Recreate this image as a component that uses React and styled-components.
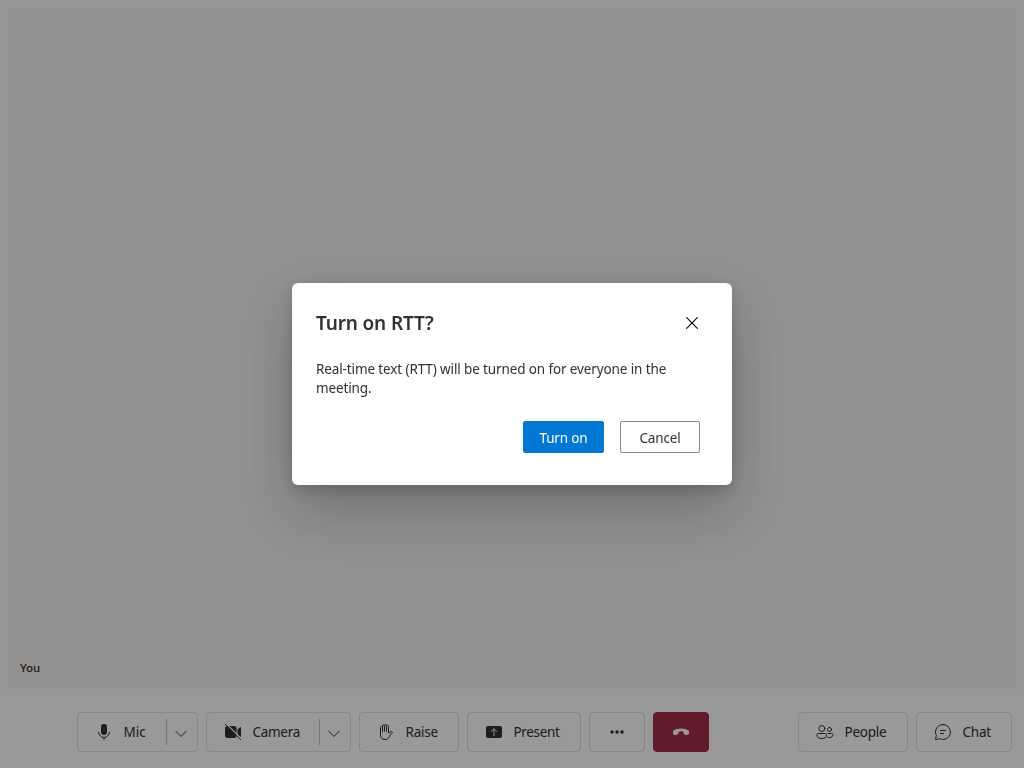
import React from "react";
import styled, { createGlobalStyle } from "styled-components";

const GlobalStyle = createGlobalStyle`
  * { box-sizing: border-box; }
  body {
    margin: 0;
    overflow: hidden;
    color: #323130;
    font-family: "Segoe UI", "Noto Sans", sans-serif;
  }
  button { font: inherit; color: inherit; margin: 0; padding: 0; border: 0; background: none; }
`;

const Page = styled.div`
  width: 100vw;
  height: 100vh;
  display: flex;
  flex-direction: column;
  background: #fff;
`;

const Gallery = styled.main`
  flex: 1;
  padding: 8px;
  background: #faf9f8;
  display: flex;
`;

const Tile = styled.section`
  flex: 1;
  display: flex;
  align-items: flex-end;
  padding: 0 12px 12px;
  border-radius: 4px;
  background: #f3f2f1;
`;

const ParticipantName = styled.span`
  font-size: 11.5px;
  font-weight: 500;
  line-height: 16px;
  letter-spacing: -0.1px;
`;

const ControlBar = styled.footer`
  height: 72px;
  display: flex;
  align-items: center;
  gap: 12px;
  padding-right: 12px;
`;

const ControlGroup = styled.div`
  display: flex;
  gap: 8px;
  justify-content: center;
  flex: ${(p) => (p.$grow ? 1 : "none")};
`;

const ControlButton = styled.button`
  width: ${(p) => p.$width}px;
  height: 40px;
  display: flex;
  align-items: center;
  justify-content: ${(p) => (p.$iconOnly ? "center" : "flex-start")};
  padding-left: ${(p) => (p.$iconOnly ? 0 : 16)}px;
  border: 1px solid ${(p) => (p.$danger ? "#a42e43" : "#e1dfdd")};
  border-radius: 4px;
  background: ${(p) => (p.$danger ? "#a42e43" : "#fff")};
  color: ${(p) => (p.$danger ? "#fff" : "#323130")};
`;

const ControlLabel = styled.span`
  margin-left: 9.5px;
  font-size: 13.5px;
  line-height: 20px;
  white-space: nowrap;
  letter-spacing: ${(p) => p.$track || 0}px;
`;

const SplitMenu = styled.span`
  margin-left: auto;
  width: 31px;
  height: 26px;
  display: flex;
  align-items: center;
  padding: 3px 0 0 8px;
  border-left: 1px solid #c8c6c4;
`;

const Icon = styled.svg`
  display: block;
  flex: none;
  width: ${(p) => p.$size || 20}px;
  height: ${(p) => p.$size || 20}px;
`;

const Overlay = styled.div`
  position: fixed;
  inset: 0;
  display: flex;
  align-items: center;
  justify-content: center;
  background: rgba(0, 0, 0, 0.4);
`;

const Dialog = styled.div`
  width: 440px;
  height: 202px;
  padding: 24px 32px 32px 24px;
  display: flex;
  flex-direction: column;
  border-radius: 6px;
  background: #fff;
  box-shadow: 0 25.6px 57.6px rgba(0, 0, 0, 0.22), 0 4.8px 14.4px rgba(0, 0, 0, 0.18);
`;

const DialogHeader = styled.header`
  height: 32px;
  display: flex;
  align-items: center;
  justify-content: space-between;
`;

const Title = styled.h1`
  margin: 0;
  font-size: 19px;
  font-weight: 600;
  line-height: 28px;
  letter-spacing: -0.15px;
`;

const CloseButton = styled.button`
  padding-right: 2px;
`;

const Message = styled.p`
  margin: 21px 0 0;
  font-size: 13.5px;
  line-height: 19px;
  letter-spacing: -0.12px;
`;

const Actions = styled.div`
  margin-top: auto;
  display: flex;
  justify-content: flex-end;
  gap: 16px;
`;

const ActionButton = styled.button`
  width: ${(p) => (p.$primary ? 81 : 80)}px;
  height: 32px;
  padding-top: 1px;
  border: 1px solid ${(p) => (p.$primary ? "#0078d4" : "#8a8886")};
  border-radius: 2px;
  background: ${(p) => (p.$primary ? "#0078d4" : "#fff")};
  color: ${(p) => (p.$primary ? "#fff" : "#323130")};
  font-size: 13.5px;
  letter-spacing: -0.15px;
`;

const stroke = { fill: "none", stroke: "currentColor", strokeLinecap: "round", strokeLinejoin: "round" };

const MicIcon = () => (
  <Icon viewBox="0 0 20 20">
    <rect x="7" y="2" width="6" height="11" rx="3" fill="currentColor" />
    <path d="M4.5 10a5.5 5.5 0 0 0 11 0M10 15.5V17.5" {...stroke} />
  </Icon>
);

const CameraOffIcon = () => (
  <Icon viewBox="0 0 20 20">
    <path d="M4.5 4h6.5a2.5 2.5 0 0 1 2.5 2.5v7A2.5 2.5 0 0 1 11 16H4.5A2.5 2.5 0 0 1 2 13.5v-7A2.5 2.5 0 0 1 4.5 4ZM14.5 7.3l2.7-2.1a.5.5 0 0 1 .8.4v8.8a.5.5 0 0 1-.8.4l-2.7-2.1Z" fill="currentColor" />
    <path d="M3.3 1.7 19 17.4" stroke="#fff" strokeWidth="1.2" />
    <path d="M2.4 2.4 17.7 17.7" {...stroke} />
  </Icon>
);

const HandIcon = () => (
  <Icon viewBox="0 0 20 20">
    <path d="M6.500 9.500V5.500a1 1 0 0 0-2 0V13c0 2.800 1.400 4.500 4.500 4.500 2 0 3.300-.7 4.200-2.500.8-1.700 1.800-3 3.100-4.100.3-.4.3-.9-.3-1.100-1.300-.3-2.500.3-3.500 1.200V4.500a1 1 0 0 0-2 0V9M6.500 9V4a1 1 0 0 1 2 0V9M8.500 9V3.500a1 1 0 0 1 2 0V9" {...stroke} />
  </Icon>
);

const PresentIcon = () => (
  <Icon viewBox="0 0 20 20">
    <rect x="2" y="4" width="16" height="12" rx="2" fill="currentColor" />
    <path d="M10 13.5V7M7.3 9.5 10 6.8l2.7 2.7" {...stroke} stroke="#fff" />
  </Icon>
);

const MoreIcon = () => (
  <Icon viewBox="0 0 20 20" fill="currentColor">
    <circle cx="5" cy="10" r="1.75" />
    <circle cx="10" cy="10" r="1.75" />
    <circle cx="15" cy="10" r="1.75" />
  </Icon>
);

const EndCallIcon = () => (
  <Icon viewBox="0 0 20 20">
    <path d="M18 10.7 17.8 11.8c-.2.9-1 1.4-1.9 1.2l-1.8-.3c-.8-.1-1.3-.7-1.5-1.4l-.4-1.600c-1.400-.5-3-.5-4.400 0l-.4 1.600c-.2.7-.7 1.300-1.500 1.400l-1.800.3c-.9.2-1.600-.3-1.900-1.200L2 10.700c-.2-.8 0-1.500.6-2.100C4.200 7.200 7 6.500 10 6.500s5.800.7 7.400 2.100c.6.6.8 1.300.6 2.100Z" fill="currentColor" />
  </Icon>
);

const PeopleIcon = () => (
  <Icon viewBox="0 0 20 20">
    <circle cx="6.8" cy="6.5" r="3" {...stroke} />
    <circle cx="14.5" cy="7.500" r="2" {...stroke} />
    <path d="M3.500 11.500h6.500c.9 0 1.500.7 1.500 1.500 0 2.400-2 3.500-4.700 3.500S2 15.400 2 13c0-.8.6-1.500 1.500-1.500ZM13 11.500h3.500c.9 0 1.500.6 1.500 1.400 0 1.600-1.300 2.600-3.500 2.600-.7 0-1.300-.1-1.800-.3" {...stroke} />
  </Icon>
);

const ChatIcon = () => (
  <Icon viewBox="0 0 20 20">
    <path d="M10 2.500a7.500 7.500 0 1 1-3.600 14.100l-3.500.9a.3.300 0 0 1-.4-.4l.9-3.500A7.500 7.500 0 0 1 10 2.500ZM7.500 8.500h5M7.500 11.500h3" {...stroke} />
  </Icon>
);

const ChevronIcon = () => (
  <Icon $size={12} viewBox="0 0 12 12">
    <path d="m.6 3 5.4 5.5L11.4 3" {...stroke} strokeLinecap="butt" />
  </Icon>
);

const CloseIcon = () => (
  <Icon $size={12} viewBox="0 0 12 12">
    <path d="m.7.7 10.6 10.6M11.3.7.7 11.3" {...stroke} stroke="#000" strokeWidth="1.1" />
  </Icon>
);

function Control({ icon, label, track, split, ...props }) {
  return (
    <ControlButton {...props}>
      {icon}
      {label && <ControlLabel $track={track}>{label}</ControlLabel>}
      {split && <SplitMenu><ChevronIcon /></SplitMenu>}
    </ControlButton>
  );
}

export default function App() {
  return (
    <>
      <GlobalStyle />
      <Page>
        <Gallery>
          <Tile><ParticipantName>You</ParticipantName></Tile>
        </Gallery>
        <ControlBar>
          <ControlGroup $grow>
            <Control $width={121} icon={<MicIcon />} label="Mic" split />
            <Control $width={145} icon={<CameraOffIcon />} label="Camera" track={-0.3} split />
            <Control $width={100} icon={<HandIcon />} label="Raise" track={-0.2} />
            <Control $width={114} icon={<PresentIcon />} label="Present" track={-0.35} />
            <Control $width={56} $iconOnly icon={<MoreIcon />} aria-label="More" />
            <Control $width={56} $iconOnly $danger icon={<EndCallIcon />} aria-label="Leave" />
          </ControlGroup>
          <ControlGroup>
            <Control $width={110} icon={<PeopleIcon />} label="People" track={-0.25} />
            <Control $width={96} icon={<ChatIcon />} label="Chat" track={-0.2} />
          </ControlGroup>
        </ControlBar>
      </Page>
      <Overlay>
        <Dialog role="dialog" aria-modal="true">
          <DialogHeader>
            <Title>Turn on RTT?</Title>
            <CloseButton aria-label="Close"><CloseIcon /></CloseButton>
          </DialogHeader>
          <Message>Real-time text (RTT) will be turned on for everyone in the meeting.</Message>
          <Actions>
            <ActionButton $primary>Turn on</ActionButton>
            <ActionButton>Cancel</ActionButton>
          </Actions>
        </Dialog>
      </Overlay>
    </>
  );
}
